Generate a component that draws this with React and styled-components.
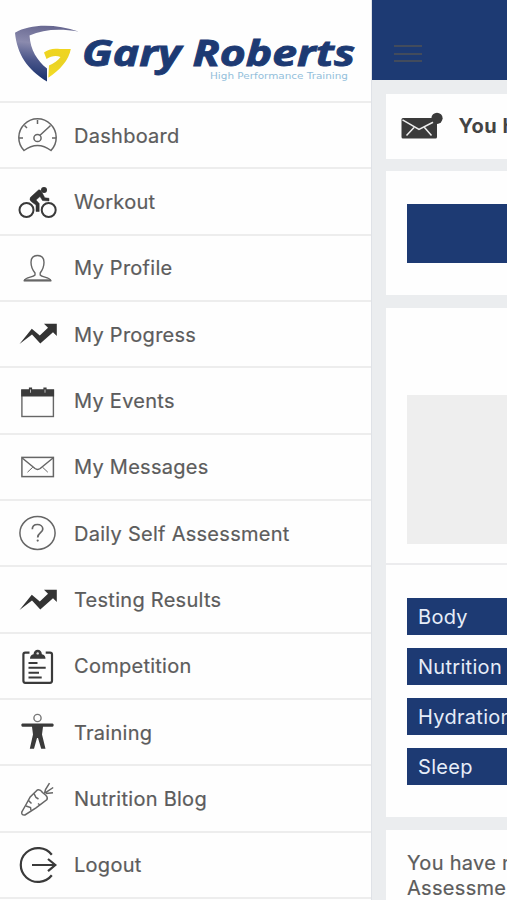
import React from "react";
import styled, { createGlobalStyle } from "styled-components";

const GlobalStyle = createGlobalStyle`
  * {
    box-sizing: border-box;
  }
  body {
    margin: 0;
    overflow: hidden;
    font-family: Inter, "Liberation Sans", sans-serif;
    background-color: #ebedef;
  }
`;

const Container = styled.div`
  display: flex;
  height: 900px;
  overflow: hidden;
`;

const Sidebar = styled.nav`
  flex: 0 0 372px;
  background-color: #fefefe;
  border-right: 1px solid #dfe2e7;
`;

const Brand = styled.div`
  height: 103px;
  border-bottom: 2px solid #ededed;
`;

const Item = styled.div`
  display: flex;
  align-items: center;
  gap: 16px;
  height: 66.35px;
  padding-left: 18px;
  border-bottom: 2px solid #ededed;
`;

const Icon = styled.svg`
  flex: none;
  width: 40px;
  height: 40px;
  overflow: visible;
  fill: none;
  stroke: ${({ $dark }) => ($dark ? "#3a3a3a" : "#666")};
  stroke-width: ${({ $weight }) => $weight || 1.4};
`;

const Label = styled.span`
  padding-top: 1px;
  font-size: 20px;
  letter-spacing: 0.27px;
  color: #5c5c5c;
  -webkit-text-stroke: 0.2px #5c5c5c;
  white-space: nowrap;
`;

const Main = styled.main`
  flex: 1;
  min-width: 0;
  overflow: hidden;
`;

const Header = styled.header`
  display: flex;
  align-items: flex-end;
  height: 80px;
  padding: 0 0 18px 21.5px;
  background-color: #1d3a73;
`;

const Burger = styled.div`
  display: flex;
  flex-direction: column;
  gap: 5.5px;
`;

const Line = styled.span`
  width: 28px;
  height: 2px;
  background-color: #424b5c;
`;

const Cards = styled.div`
  display: flex;
  flex-direction: column;
  gap: 12.5px;
  padding: 14px 0 0 13.5px;
`;

const Card = styled.section`
  height: ${({ $height }) => $height}px;
  background-color: #fefefe;
  overflow: hidden;
`;

const Notice = styled.div`
  display: flex;
  align-items: center;
  gap: 18px;
  height: 100%;
  padding-left: 15px;
  font-size: 20px;
  font-weight: 700;
  letter-spacing: 0.5px;
  color: #444;
  white-space: nowrap;
`;

const Button = styled.div`
  height: 59px;
  margin: 33px 0 0 21.5px;
  background-color: #1d3a73;
`;

const Chart = styled.div`
  height: 257px;
  padding: 87px 0 0 21.5px;
  border-bottom: 2px solid #ececee;
`;

const Placeholder = styled.div`
  height: 149px;
  background-color: #eee;
`;

const Tags = styled.div`
  display: flex;
  flex-direction: column;
  gap: 12.5px;
  padding: 33px 0 0 21.5px;
`;

const Tag = styled.div`
  height: 37.5px;
  padding-left: 11px;
  font-size: 20px;
  line-height: 38px;
  letter-spacing: 0.3px;
  color: #e6edf8;
  background-color: #1d3a73;
`;

const Text = styled.p`
  margin: 0;
  padding: 21.5px 0 0 21.5px;
  font-size: 20px;
  line-height: 25px;
  letter-spacing: 0.3px;
  color: #5c5c5c;
  -webkit-text-stroke: 0.2px #5c5c5c;
  white-space: nowrap;
`;

const Logo = () => (
  <svg width="370" height="100" viewBox="0 0 370 100">
    <defs>
      <linearGradient id="shield" x1="0.6" y1="0" x2="0.45" y2="1">
        <stop offset="0" stopColor="#66668f" />
        <stop offset="0.35" stopColor="#8b8bae" />
        <stop offset="0.65" stopColor="#4b568a" />
        <stop offset="1" stopColor="#17306b" />
      </linearGradient>
      <linearGradient id="seven" x1="0" y1="0" x2="0" y2="1">
        <stop offset="0" stopColor="#f0d51f" />
        <stop offset="0.5" stopColor="#ead326" />
        <stop offset="1" stopColor="#f5dd24" />
      </linearGradient>
    </defs>
    <path
      d="M15 32.7C31 23.5 56 24 78.5 31.5C59 28.5 43 29.5 29.5 35.5C30.5 50 37 60.5 47 68.5V81.5C27 69 17 54 15 32.7Z"
      fill="url(#shield)"
    />
    <path
      d="M44 52.5C48 49 54 48 60 49L70.8 49C69 60 60 70 48.3 77.8L49 65.5C54 63.5 58 60.5 60.5 57C56 55 51 56 46.5 59Z"
      fill="url(#seven)"
    />
    <text
      x="82"
      y="66"
      textLength="273"
      lengthAdjust="spacingAndGlyphs"
      fontFamily="Open Sans, sans-serif"
      fontSize="36"
      fontWeight="700"
      fontStyle="italic"
      fill="#1d3a73"
      stroke="#1d3a73"
      strokeWidth="0.9"
    >
      Gary Roberts
    </text>
    <text
      x="210"
      y="79"
      textLength="138"
      lengthAdjust="spacingAndGlyphs"
      fontFamily="DejaVu Sans, sans-serif"
      fontSize="9"
      fill="#93bfdb"
    >
      High Performance Training
    </text>
  </svg>
);

const DashboardIcon = () => (
  <Icon viewBox="0 0 40 40" $weight={1.5}>
    <path d="M6 35.5A18.7 18.7 0 1 1 33 35.5Q19.5 25.5 6 35.5Z" />
    <circle cx="19.5" cy="23" r="3.6" />
    <path d="M22 20.3L31 12M19.5 5v4M1 23h4M34 23h4M6.5 10.5l2.5 2.5M32.5 10.5l-2 2" />
  </Icon>
);

const WorkoutIcon = () => (
  <Icon viewBox="0 0 40 40" $dark $weight={2}>
    <circle cx="8.5" cy="28" r="7" />
    <circle cx="30.7" cy="28" r="7" />
    <circle cx="26" cy="8" r="3" fill="#333" stroke="none" />
    <path
      d="M20.5 8L12.5 15.3Q11 18 13.5 19.8L18 23V29.5H21.2V21.5L18 18L22 14.5L24.5 18.5L31 19V16.3L26.8 15.8L24 10.5Q22.5 7 20.5 8Z"
      fill="#333"
      stroke="#333"
      strokeWidth="0.5"
    />
  </Icon>
);

const ProfileIcon = () => (
  <Icon viewBox="0 0 40 40" $weight={1.4}>
    <path d="M17 25C14.5 22 13 18 13 14.3C13 10 15.5 7.5 19.5 7.5S26 10 26 14.3C26 18 24.5 22 22.2 25V27C24 29.5 31.5 29 32.8 32.5H6.3C7.5 29 15 29.5 17 27Z" />
    <path d="M6 32.4H33" strokeWidth="2" />
  </Icon>
);

const ProgressIcon = () => (
  <Icon viewBox="0 0 40 40" $dark>
    <path
      d="M1.5 30L13.8 14.8L21.8 21.5L30 13.8L26 9.8H38.8V22L35 18.2L22.3 29.6L14 20.6Z"
      fill="#333"
      stroke="none"
    />
  </Icon>
);

const EventsIcon = () => (
  <Icon viewBox="0 0 40 40" $weight={1.4}>
    <rect x="3.9" y="9" width="31.5" height="26.5" />
    <path d="M3.2 8.5H36.1V15.5H3.2Z" fill="#3c3c3c" stroke="none" />
    <path d="M12.5 6.5v4M27 6.5v4" stroke="#3c3c3c" strokeWidth="3.2" />
    <path d="M12.5 8.5v3.2M27 8.5v3.2" stroke="#bbb" strokeWidth="1" />
  </Icon>
);

const MessagesIcon = () => (
  <Icon viewBox="0 0 40 40" $weight={1.5}>
    <rect x="3.9" y="10.4" width="31.5" height="19.2" />
    <path d="M4.2 11L17 21.5Q19.6 23.4 22.2 21.5L35 11" />
    <path d="M9.5 25.2L14.8 20.2M29.8 25.2L24.5 20.2" strokeWidth="1" />
  </Icon>
);

const AssessmentIcon = () => (
  <Icon viewBox="0 0 40 40" $weight={1.5}>
    <ellipse cx="19.5" cy="20" rx="17.6" ry="16.4" />
    <path d="M14.3 16.3C14.3 13.1 16.4 11.5 19.4 11.5S24.8 13.4 24.8 16.1C24.8 19.9 19.7 19.6 19.7 24.6" strokeWidth="1.7" />
    <circle cx="19.7" cy="27.6" r="1.1" fill="#666" stroke="none" />
  </Icon>
);

const CompetitionIcon = () => (
  <Icon viewBox="0 0 40 40" $dark $weight={2.2}>
    <path d="M11.5 6.6H7.2Q5.4 6.6 5.4 8.6V34.8Q5.4 36.8 7.2 36.8H32Q34 36.8 34 34.8V8.6Q34 6.6 32 6.6H27.7" />
    <path
      d="M12 12.8Q12 8.8 15.5 8.3Q16 3.8 19.7 3.8T23.9 8.3Q27.5 8.8 27.5 12.8Z"
      fill="#3a3a3a"
      stroke="none"
    />
    <circle cx="19.7" cy="7.4" r="1.2" fill="#ddd" stroke="none" />
    <path d="M10.5 17H19.5M10.5 21.8H27.7M10.5 26.8H21M10.5 31.5H23.7" strokeWidth="1.9" />
  </Icon>
);

const TrainingIcon = () => (
  <Icon viewBox="0 0 40 40" $dark>
    <circle cx="19.5" cy="6" r="3.6" stroke="#777" />
    <path
      d="M4.5 11.4H34.5Q35.7 11.4 35.7 13T34.5 14.7H25L24 22.5L27.5 36.8H23.2L20 26H19L16 36.8H11.8L15 22.5L14 14.7H4.5Q3.3 14.7 3.3 13T4.5 11.4Z"
      fill="#3a3a3a"
      stroke="none"
    />
  </Icon>
);

const CarrotIcon = () => (
  <Icon viewBox="0 0 40 40" $weight={1.5}>
    <path d="M19.3 11L12.2 18L7.5 26.5L3.8 33Q3.2 36.5 7 36L18 28.8L29 20.5Q30 18 27.5 16L24.5 13.5Q22 10 19.3 11Z" />
    <path d="M26.5 14.5L27.5 10.5L31.5 4.2M26.8 14.2L35.2 8.5M28 14.5L35 13.7M16 14.5L18 18.5L20.5 20M10.5 21.5L13.5 24.5M8 27L12.5 28.5L13 31.5M20 24.5L22 26" />
  </Icon>
);

const LogoutIcon = () => (
  <Icon viewBox="0 0 40 40" $dark $weight={2.2}>
    <path d="M33.8 9.7A17.3 16.9 0 1 0 33.8 30.3" />
    <path d="M14 20H37.5M30 14L37.3 20L30 26.2" />
  </Icon>
);

const NewMailIcon = () => (
  <Icon viewBox="0 0 40 40" $dark>
    <rect x="0.5" y="12" width="35.5" height="20.5" rx="1.5" fill="#3a3a3a" stroke="none" />
    <path d="M1.5 13.8L18 23.5L34.5 15M5.5 29.5L13 21.5M30.5 29.5L23.5 21.5" stroke="#eee" strokeWidth="1.5" />
    <circle cx="36" cy="12.3" r="5.6" fill="#3a3a3a" stroke="none" />
  </Icon>
);

const menu = [
  { name: "Dashboard", icon: DashboardIcon },
  { name: "Workout", icon: WorkoutIcon },
  { name: "My Profile", icon: ProfileIcon },
  { name: "My Progress", icon: ProgressIcon },
  { name: "My Events", icon: EventsIcon },
  { name: "My Messages", icon: MessagesIcon },
  { name: "Daily Self Assessment", icon: AssessmentIcon },
  { name: "Testing Results", icon: ProgressIcon },
  { name: "Competition", icon: CompetitionIcon },
  { name: "Training", icon: TrainingIcon },
  { name: "Nutrition Blog", icon: CarrotIcon },
  { name: "Logout", icon: LogoutIcon },
];

const tags = ["Body", "Nutrition", "Hydration", "Sleep"];

const App = () => {
  return (
    <>
      <GlobalStyle />
      <Container>
        <Sidebar>
          <Brand>
            <Logo />
          </Brand>
          {menu.map(({ name, icon: ItemIcon }) => (
            <Item key={name}>
              <ItemIcon />
              <Label>{name}</Label>
            </Item>
          ))}
        </Sidebar>
        <Main>
          <Header>
            <Burger>
              <Line />
              <Line />
              <Line />
            </Burger>
          </Header>
          <Cards>
            <Card $height={64.5}>
              <Notice>
                <NewMailIcon />
                You have
              </Notice>
            </Card>
            <Card $height={124}>
              <Button />
            </Card>
            <Card $height={509.5}>
              <Chart>
                <Placeholder />
              </Chart>
              <Tags>
                {tags.map((tag) => (
                  <Tag key={tag}>{tag}</Tag>
                ))}
              </Tags>
            </Card>
            <Card $height={120}>
              <Text>
                You have not
                <br />
                Assessment
              </Text>
            </Card>
          </Cards>
        </Main>
      </Container>
    </>
  );
};

export default App;
